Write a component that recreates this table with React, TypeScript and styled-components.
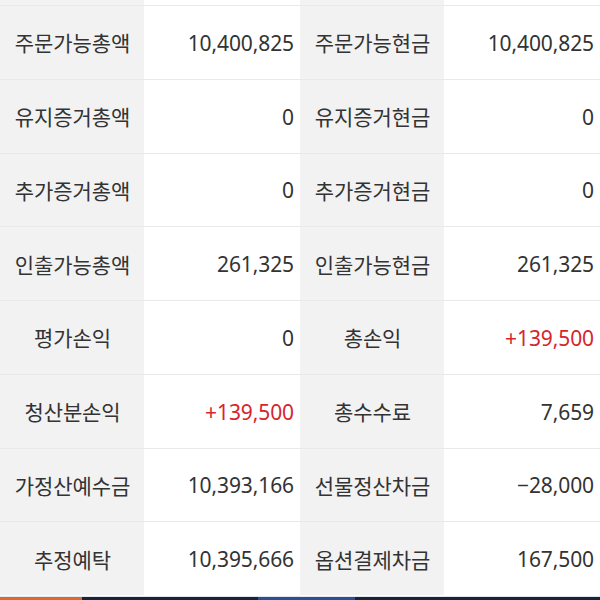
import { Fragment } from "react";
import styled, { createGlobalStyle } from "styled-components";

const GlobalStyle = createGlobalStyle`
  html, body {
    margin: 0;
    padding: 0;
    height: 600px;
    overflow: hidden;
    background: #fff;
  }
  body {
    font-family: "Noto Sans", "Noto Sans CJK KR", sans-serif;
    color: #333;
  }
`;

const Screen = styled.div`
  height: 600px;
  display: flex;
  flex-direction: column;
  overflow: hidden;
`;

const Table = styled.div`
  display: grid;
  grid-template-columns: 144px 156px 144px 156px;
  grid-template-rows: 5px repeat(8, 73.75px);
`;

const Cell = styled.div<{ $label?: boolean; $top?: boolean; $red?: boolean }>`
  display: flex;
  align-items: center;
  justify-content: ${(p) => (p.$label ? "center" : "flex-end")};
  padding: ${(p) => (p.$label ? "0 0 0 1px" : "1px 6px 0 0")};
  background: ${(p) => (p.$label ? "#f2f2f2" : "#fff")};
  border-top: ${(p) => (p.$top ? "none" : "1.5px solid #e9e9e9")};
  font-size: 21px;
  letter-spacing: -0.1px;
  color: ${(p) => (p.$red ? "#d7252c" : "#333")};
  white-space: nowrap;
  box-sizing: border-box;
`;

const TabBar = styled.div`
  margin-top: 1px;
  height: 56px;
  display: flex;
  background: #1c2433;
  border-top: 1px solid #dfe6ee;
`;

const Tab = styled.div<{ $color?: string; $w: number }>`
  width: ${(p) => p.$w}px;
  background: ${(p) => p.$color || "transparent"};
`;

type Row = [string, string, string, string];

const rows: Row[] = [
  ["주문가능총액", "10,400,825", "주문가능현금", "10,400,825"],
  ["유지증거총액", "0", "유지증거현금", "0"],
  ["추가증거총액", "0", "추가증거현금", "0"],
  ["인출가능총액", "261,325", "인출가능현금", "261,325"],
  ["평가손익", "0", "총손익", "+139,500"],
  ["청산분손익", "+139,500", "총수수료", "7,659"],
  ["가정산예수금", "10,393,166", "선물정산차금", "−28,000"],
  ["추정예탁", "10,395,666", "옵션결제차금", "167,500"],
];

export default function App() {
  return (
    <Screen>
      <GlobalStyle />
      <Table>
        <Cell $label $top />
        <Cell $top />
        <Cell $label $top />
        <Cell $top />
        {rows.map(([l1, v1, l2, v2]) => (
          <Fragment key={l1}>
            <Cell $label>{l1}</Cell>
            <Cell $red={v1.startsWith("+")}>{v1}</Cell>
            <Cell $label>{l2}</Cell>
            <Cell $red={v2.startsWith("+")}>{v2}</Cell>
          </Fragment>
        ))}
      </Table>
      <TabBar>
        <Tab $w={82} $color="#e2672a" />
        <Tab $w={176} />
        <Tab $w={97} $color="#2d4f8f" />
      </TabBar>
    </Screen>
  );
}
